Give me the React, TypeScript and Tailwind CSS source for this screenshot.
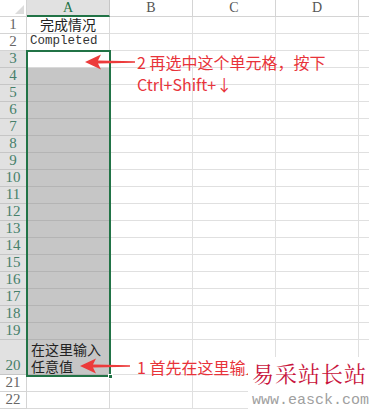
const rowHeights = [17, 17, 17, 17, 17, 17, 17, 17, 17, 17, 17, 17, 17, 17, 17, 17, 17, 17, 17, 35, 17, 17];

function Arrow({ className }: { className: string }) {
  return (
    <svg className={className} width="50" height="16" viewBox="0 0 50 16">
      <path d="M0 8 L16 0.5 L13 6.5 L50 7.2 L50 8.8 L13 9.5 L16 15.5 Z" fill="#ec3b3b" />
    </svg>
  );
}

export default function App() {
  return (
    <div className="relative w-[369px] h-[413px] overflow-hidden bg-white text-[#222]">
      {/* column headers */}
      <div className="flex h-[17px]">
        <div className="relative w-[27px] border-r border-b border-[#d4d4d4]">
          <div className="absolute right-[2px] bottom-[2px] w-0 h-0 border-l-[9px] border-l-transparent border-b-[9px] border-b-[#dcdcdc]" />
        </div>
        <div className="w-[83px] bg-[#e1e1e1] border-b-2 border-[#217346] border-r border-r-[#c6c6c6] flex items-center justify-center text-[14px] leading-none text-[#217346] font-['Liberation_Serif',serif]">
          A
        </div>
        {["B", "C", "D"].map((c) => (
          <div
            key={c}
            className="w-[83px] border-r border-b border-[#d4d4d4] flex items-center justify-center text-[14px] leading-none text-[#555] font-['Liberation_Serif',serif]"
          >
            {c}
          </div>
        ))}
        <div className="flex-1 border-b border-[#d4d4d4]" />
      </div>

      {/* rows */}
      {rowHeights.map((h, i) => {
        const n = i + 1;
        const sel = n >= 3 && n <= 20;
        const grey = n >= 4 && n <= 20;
        return (
          <div key={n} className="flex" style={{ height: h }}>
            <div
              className={
                "w-[27px] border-r border-b flex items-end justify-center pb-[1px] text-[15px] leading-none font-['Liberation_Serif',serif] " +
                (sel ? "bg-[#e1e1e1] text-[#46806a] border-[#c6c6c6]" : "text-[#666] border-[#d4d4d4]")
              }
            >
              {n}
            </div>
            <div
              className={
                "w-[83px] border-r border-b flex " +
                (grey ? "bg-[#c6c6c6] border-[#b4b4b4]" : "border-[#d9d9d9]")
              }
            >
              {n === 1 && (
                <div className="w-full flex items-end justify-center text-[14px] leading-[17px] font-['Noto_Sans_CJK_SC',sans-serif]">
                  完成情况
                </div>
              )}
              {n === 2 && (
                <div className="pl-[3px] flex items-end text-[12.5px] leading-[17px] text-[#333] font-['Liberation_Mono',monospace]">
                  Completed
                </div>
              )}
              {n === 20 && (
                <div className="pl-[4px] pt-[1px] text-[14px] leading-[17px] font-['Noto_Sans_CJK_SC',sans-serif]">
                  在这里输入
                  <br />
                  任意值
                </div>
              )}
            </div>
            {[0, 1, 2].map((k) => (
              <div key={k} className="w-[83px] border-r border-b border-[#e0e0e0]" />
            ))}
            <div className="flex-1 border-b border-[#e0e0e0]" />
          </div>
        );
      })}

      {/* selection border + fill handle */}
      <div className="absolute left-[26px] top-[50px] w-[85px] h-[327px] border-2 border-[#217346]" />
      <div className="absolute left-[108px] top-[374px] w-[5px] h-[5px] bg-[#217346] border border-white" />

      {/* annotations */}
      <Arrow className="absolute left-[85px] top-[54px]" />
      <div className="absolute left-[137px] top-[51px] text-[16px] leading-[22px] text-[#e8333a] font-['Noto_Sans_CJK_SC',sans-serif]">
        <div>2 再选中这个单元格，按下</div>
        <div>Ctrl+Shift+↓</div>
      </div>

      <Arrow className="absolute left-[80px] top-[358px]" />
      <div className="absolute left-[137px] top-[356px] text-[16px] leading-[22px] text-[#e8333a] font-['Noto_Sans_CJK_SC',sans-serif] whitespace-nowrap">
        1 首先在这里输入
      </div>

      {/* watermark */}
      <div className="absolute left-[248px] top-[357px] w-[121px] h-[56px] bg-white pl-[4px] pt-[2px]">
        <div className="text-[22px] leading-[28px] tracking-[1px] text-[#c8143c] font-['Noto_Serif_CJK_SC','Noto_Sans_CJK_SC',serif] whitespace-nowrap">
          易采站长站
        </div>
        <div className="mt-[3px] text-[15px] leading-[22px] text-[#a0a0a0] font-['Liberation_Mono',monospace] whitespace-nowrap">
          www.easck.com
        </div>
      </div>
    </div>
  );
}
